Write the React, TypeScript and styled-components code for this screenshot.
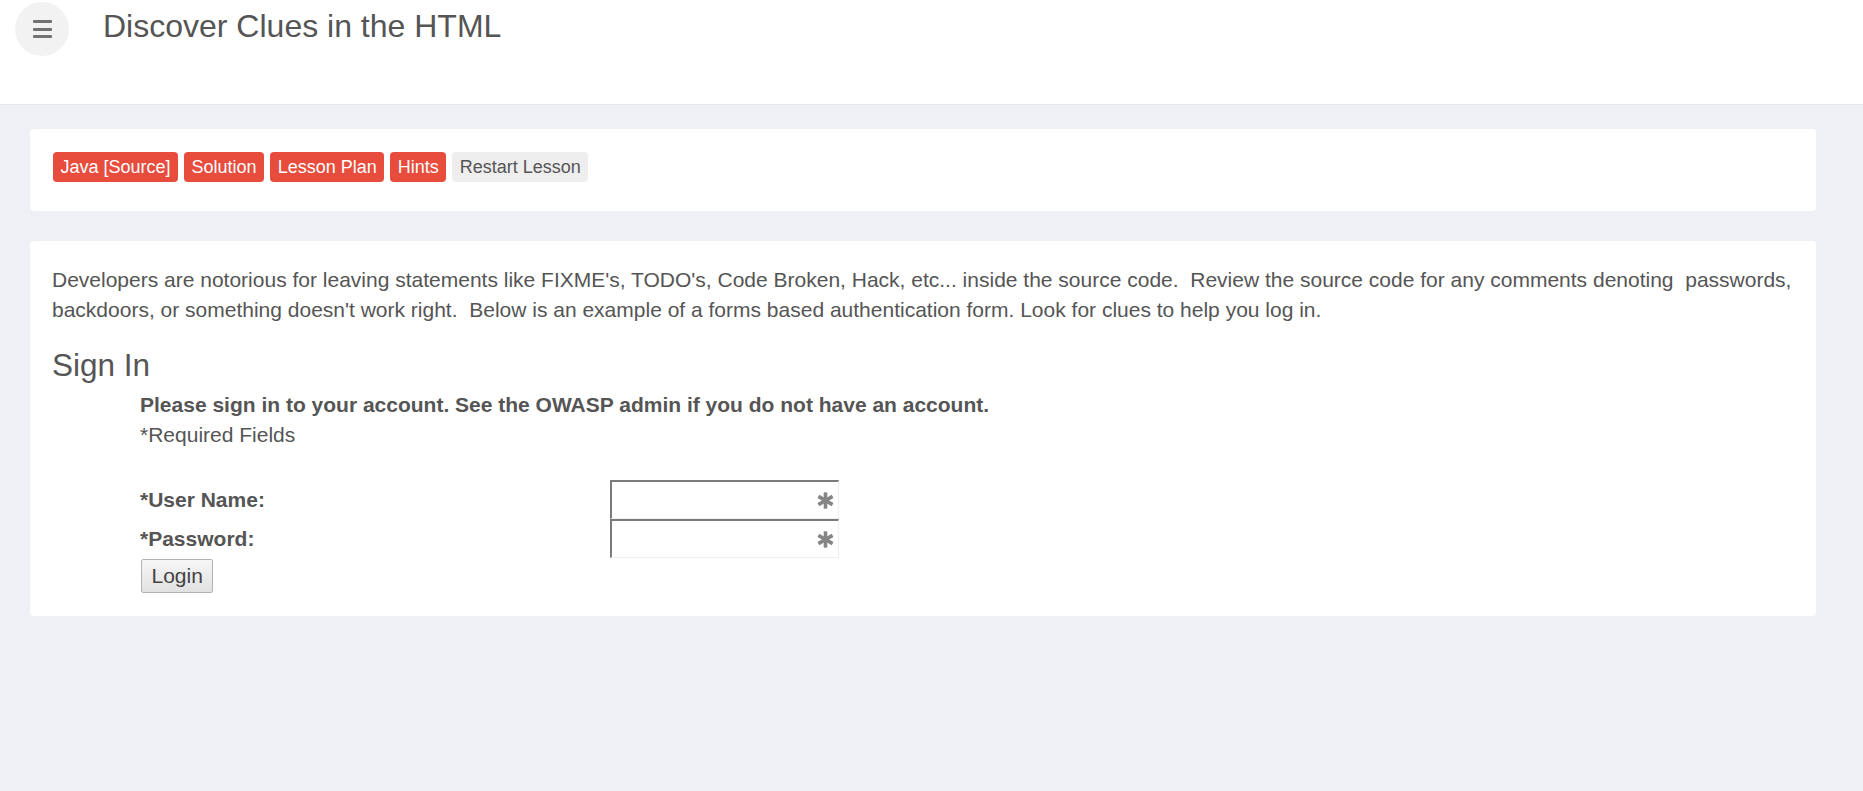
import React from "react";
import styled, { createGlobalStyle } from "styled-components";

const GlobalStyle = createGlobalStyle`
  html, body {
    margin: 0;
    padding: 0;
    background: #eff0f6;
    font-family: "Liberation Sans", Arial, Helvetica, sans-serif;
    color: #555555;
  }
  #root {
    min-height: 100vh;
  }
  * { box-sizing: border-box; }
`;

const Header = styled.header`
  display: flex;
  align-items: flex-start;
  height: 105px;
  background: #ffffff;
  border-bottom: 1px solid #e6e7ee;
`;

const MenuButton = styled.button`
  width: 54px;
  height: 54px;
  margin: 2px 0 0 15px;
  border: none;
  border-radius: 50%;
  background: #f2f2f2;
  display: flex;
  flex-direction: column;
  align-items: center;
  justify-content: center;
  gap: 4.5px;
  padding: 0;
  cursor: pointer;
`;

const Bar = styled.span`
  display: block;
  width: 19px;
  height: 3px;
  background: #727272;
  border-radius: 1px;
`;

const Title = styled.h1`
  margin: 6px 0 0 34px;
  font-size: 32px;
  line-height: 40px;
  font-weight: normal;
  color: #555555;
`;

const Main = styled.main`
  display: flex;
  flex-direction: column;
  gap: 30px;
  padding: 24px 47px 40px 30px;
`;

const Card = styled.section<{ $pad: string }>`
  background: #ffffff;
  border-radius: 4px;
  padding: ${(p) => p.$pad};
`;

const Toolbar = styled.div`
  display: flex;
  gap: 6px;
`;

const ToolButton = styled.button<{ $variant?: "red" | "plain" }>`
  display: inline-flex;
  align-items: center;
  height: 30px;
  padding: 0 ${(p) => (p.$variant === "plain" ? "7.5px" : "7.5px")};
  border: none;
  border-radius: 4px;
  font-family: "Liberation Sans", Arial, sans-serif;
  font-size: 18px;
  background: ${(p) => (p.$variant === "plain" ? "#eeeeee" : "#e74c3c")};
  color: ${(p) => (p.$variant === "plain" ? "#555555" : "#ffffff")};
  cursor: pointer;
`;

const Intro = styled.p`
  margin: 0;
  font-size: 21px;
  line-height: 30px;
`;

const Heading = styled.h2`
  margin: 23px 0 7px;
  font-size: 31.5px;
  line-height: 35px;
  font-weight: normal;
  color: #555555;
`;

const FormBlock = styled.div`
  padding-left: 88px;
  font-size: 21px;
  line-height: 30px;
`;

const Lead = styled.div`
  font-weight: bold;
`;

const Note = styled.div`
  margin-bottom: 30px;
`;

const FormGrid = styled.div`
  display: grid;
  grid-template-columns: 470px 229px;
  align-items: center;
`;

const Label = styled.label`
  font-weight: bold;
  font-size: 21px;
`;

const InputWrap = styled.div`
  position: relative;
  width: 229px;
  height: 39px;
`;

const TextInput = styled.input`
  width: 100%;
  height: 100%;
  border-top: 2px solid #7b7b7b;
  border-left: 2px solid #7b7b7b;
  border-right: 1px solid #efefef;
  border-bottom: 1px solid #efefef;
  background: #ffffff;
  padding: 0 30px 0 6px;
  font-size: 18px;
  outline: none;
`;

const Required = styled.svg`
  position: absolute;
  right: 5px;
  top: 50%;
  margin-top: -8px;
  width: 17px;
  height: 17px;
  pointer-events: none;
`;

const LoginButton = styled.button`
  justify-self: start;
  margin: 1px 0 0 1px;
  height: 34px;
  padding: 0 9.5px;
  border: 1px solid #b3b3b3;
  border-radius: 2px;
  background: linear-gradient(#f6f6f6, #e1e1e1);
  font-family: "Liberation Sans", Arial, sans-serif;
  font-size: 21px;
  color: #444444;
  cursor: pointer;
`;

const Asterisk = () => (
  <Required viewBox="0 0 16 16" aria-hidden="true">
    <g stroke="#858585" strokeWidth="3.4" strokeLinecap="butt">
      <line x1="8" y1="0.3" x2="8" y2="15.7" />
      <line x1="1.3" y1="4.15" x2="14.7" y2="11.85" />
      <line x1="1.3" y1="11.85" x2="14.7" y2="4.15" />
    </g>
  </Required>
);

const Field = ({ type, name }: { type: string; name: string }) => (
  <InputWrap>
    <TextInput type={type} name={name} />
    <Asterisk />
  </InputWrap>
);

export default function App() {
  return (
    <>
      <GlobalStyle />
      <Header>
        <MenuButton aria-label="menu">
          <Bar />
          <Bar />
          <Bar />
        </MenuButton>
        <Title>Discover Clues in the HTML</Title>
      </Header>
      <Main>
        <Card $pad="23px 23px 29px">
          <Toolbar>
            <ToolButton $variant="red">Java [Source]</ToolButton>
            <ToolButton $variant="red">Solution</ToolButton>
            <ToolButton $variant="red">Lesson Plan</ToolButton>
            <ToolButton $variant="red">Hints</ToolButton>
            <ToolButton $variant="plain">Restart Lesson</ToolButton>
          </Toolbar>
        </Card>
        <Card $pad="24px 15px 23px 22px">
          <Intro>
            Developers are notorious for leaving statements like FIXME's, TODO's, Code Broken, Hack, etc... inside the
            source code.{"\u00a0 "}Review the source code for any comments denoting{"\u00a0 "}passwords, backdoors, or
            something doesn't work right.{"\u00a0 "}Below is an example of a forms based authentication form. Look for
            clues to help you log in.
          </Intro>
          <Heading>Sign In</Heading>
          <FormBlock>
            <Lead>Please sign in to your account. See the OWASP admin if you do not have an account.</Lead>
            <Note>*Required Fields</Note>
            <FormGrid>
              <Label>*User Name:</Label>
              <Field type="text" name="Username" />
              <Label>*Password:</Label>
              <Field type="password" name="Password" />
              <LoginButton type="button">Login</LoginButton>
            </FormGrid>
          </FormBlock>
        </Card>
      </Main>
    </>
  );
}
